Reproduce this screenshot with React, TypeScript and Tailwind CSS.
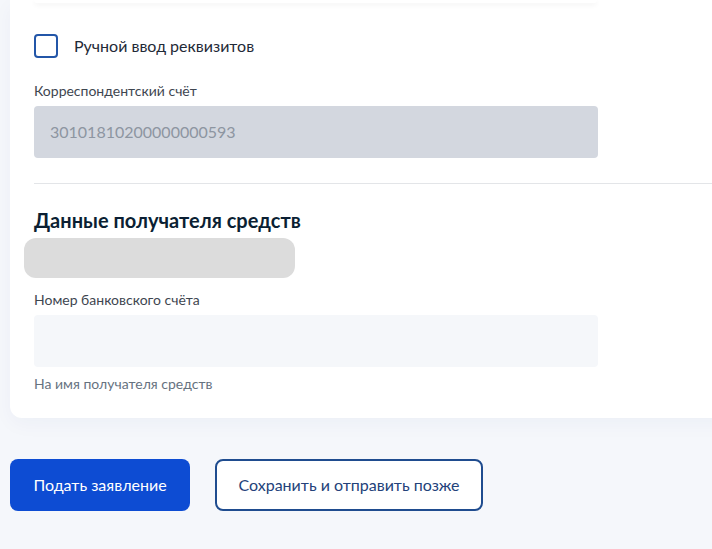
export default function App() {
  return (
    <div className="h-[549px] w-[712px] overflow-hidden bg-[#f5f7fb] pl-[10px] font-['Lato','Noto_Sans',sans-serif]">
      {/* Form card */}
      <div className="w-[760px] rounded-b-[12px] bg-white pb-[26px] pl-[24px] shadow-[0_6px_20px_rgba(20,60,140,0.04)]">
        {/* bottom edge of the field above */}
        <div className="h-[3px] w-[563px] rounded-b-[4px] bg-white shadow-[0_2px_5px_rgba(0,0,0,0.06)]" />

        <label className="mt-[31px] flex items-center gap-[16px]">
          <span className="h-[24px] w-[24px] rounded-[4px] border-2 border-[#2356a8] bg-white" />
          <span className="text-[16px] leading-[24px] text-[#1f2a37]">Ручной ввод реквизитов</span>
        </label>

        <div className="mt-[25px] text-[14px] leading-[16px] text-[#3e4650]">Корреспондентский счёт</div>
        <div className="mt-[7px] flex h-[52px] w-[564px] items-center rounded-[4px] bg-[#d3d7df] px-[16px] text-[16px] text-[#8d95a1]">
          30101810200000000593
        </div>

        <div className="mt-[25px] h-px bg-[#e3e5e8]" />

        <h2 className="mt-[24px] text-[20px] font-bold leading-[24px] text-[#0b1f33]">Данные получателя средств</h2>
        <div className="-ml-[10px] mt-[6px] h-[40px] w-[271px] rounded-[12px] bg-[#dcdcdc]" />

        <div className="mt-[14px] text-[14px] leading-[16px] text-[#3e4650]">Номер банковского счёта</div>
        <div className="mt-[7px] h-[52px] w-[564px] rounded-[4px] bg-[#f5f7fa]" />
        <div className="mt-[9px] text-[14px] leading-[16px] text-[#66727f]">На имя получателя средств</div>
      </div>

      {/* Actions */}
      <div className="mt-[41px] flex gap-[25px]">
        <button className="h-[52px] w-[180px] rounded-[8px] bg-[#0d4cd3] text-[16px] text-white">
          Подать заявление
        </button>
        <button className="h-[52px] w-[268px] rounded-[8px] border-2 border-[#1f4c8f] bg-white text-[16px] text-[#23427a]">
          Сохранить и отправить позже
        </button>
      </div>
    </div>
  );
}
